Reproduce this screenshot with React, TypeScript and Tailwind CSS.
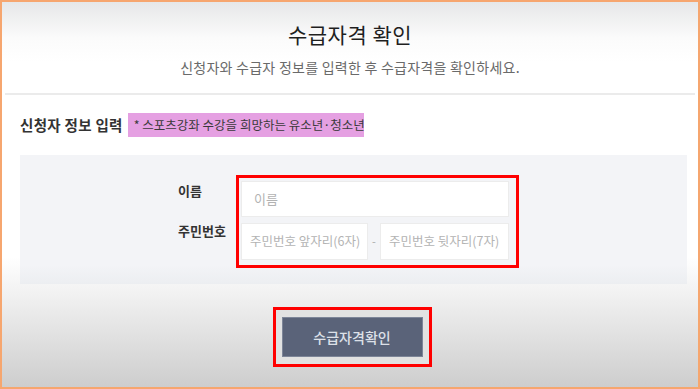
import React from "react";

export default function App() {
  return (
    <div
      className="w-[700px] h-[389px] overflow-hidden border-[2px] border-[#f6a66f] bg-[linear-gradient(to_bottom,#e6e7e8_0px,#fbfbfb_36px,#ffffff_60px,#ffffff_255px,#f2f2f2_290px,#cdcdcd_386px)] flex flex-col"
      style={{ fontFamily: '"Noto Sans CJK KR", "Noto Sans", sans-serif' }}
    >
      <div className="pt-[17px] flex flex-col items-center">
        <div className="text-[21px] leading-[30px] font-normal text-[#1f1f1f] tracking-[0.5px]">수급자격 확인</div>
        <div className="mt-[8px] text-[14px] leading-[20px] text-[#6a6a6a] tracking-[0.25px]">
          신청자와 수급자 정보를 입력한 후 수급자격을 확인하세요.
        </div>
      </div>
      <div className="mt-[16px] mx-[3px] h-[2px] bg-[#ebebeb]" />
      <div className="mt-[18px] ml-[18px] flex items-center">
        <div className="text-[14.5px] leading-[24px] font-bold text-[#333] tracking-[0.3px]">신청자 정보 입력</div>
        <div className="ml-[5px] w-[236px] h-[24px] px-[6px] bg-[#e5a0e2] text-[12.5px] leading-[24px] text-[#3a3a3a] whitespace-nowrap">
          * 스포츠강좌 수강을 희망하는 유소년·청소년
        </div>
      </div>
      <div className="mt-[18px] ml-[18px] mr-[11px] h-[129px] bg-[linear-gradient(to_bottom,#f3f4f7_0%,#f3f4f7_85%,#eceef1_100%)] pt-[20px] flex">
        <div className="w-[216px] pl-[158px] pt-[7px] flex flex-col text-[13px] leading-[18px] font-bold text-[#333]">
          <div>이름</div>
          <div className="mt-[22px] whitespace-nowrap">주민번호</div>
        </div>
        <div className="w-[283px] h-[93px] border-[3px] border-[#ff0000] pt-[3px] pl-[2px] pr-[7px] pb-[5px] flex flex-col gap-[6px]">
          <div className="h-[36px] bg-white border border-[#ececec] flex items-center px-[12px] text-[13px] text-[#b3b3b3]">
            이름
          </div>
          <div className="h-[37px] flex items-center">
            <div className="w-[127px] h-full bg-white border border-[#ececec] flex items-center px-[8px] text-[12.5px] text-[#b3b3b3] whitespace-nowrap">
              주민번호 앞자리(6자)
            </div>
            <div className="w-[12px] text-center text-[11px] text-[#aaa]">-</div>
            <div className="flex-1 h-full bg-white border border-[#ececec] flex items-center px-[8px] text-[12.5px] text-[#b3b3b3] whitespace-nowrap">
              주민번호 뒷자리(7자)
            </div>
          </div>
        </div>
      </div>
      <div className="mt-[23px] flex justify-center">
        <div className="ml-[4px] border-[3px] border-[#ff0000] px-[6px] pt-[7px] pb-[7px] bg-[#e2e2e2]">
          <div className="w-[141px] h-[40px] bg-[#5a6379] border border-[#7d8598] flex items-center justify-center text-[14px] font-medium text-[#dde0e8]">
            수급자격확인
          </div>
        </div>
      </div>
    </div>
  );
}
